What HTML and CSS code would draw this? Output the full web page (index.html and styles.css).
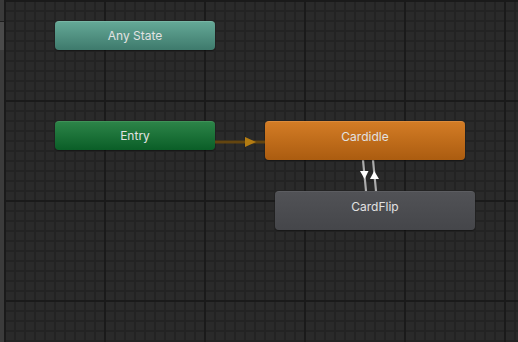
FILE: index.html
```html
<!DOCTYPE html>
<html>
<head>
<meta charset="utf-8">
<link rel="stylesheet" href="styles.css">
</head>
<body>
<div class="window">
  <div class="strip">
    <div class="strip-top"></div>
    <div class="strip-thumb"></div>
    <div class="strip-rest"></div>
  </div>
  <div class="graph">
    <svg class="links" width="514" height="342" viewBox="4 0 514 342">
      <line x1="215" y1="142" x2="265" y2="142" stroke="#634510" stroke-width="3"/>
      <polygon points="245,137 256,142 245,147" fill="#b47c12"/>
      <line x1="363" y1="160" x2="366" y2="191" stroke="#c4c4c4" stroke-width="2.2" stroke-opacity="0.85"/>
      <line x1="373" y1="160" x2="376" y2="191" stroke="#c4c4c4" stroke-width="2.2" stroke-opacity="0.85"/>
      <polygon points="360,171 368.5,171 364.6,179" fill="#ffffff"/>
      <polygon points="370,179 379,179 374.2,171" fill="#ffffff"/>
    </svg>
    <div class="node any-state">Any State</div>
    <div class="node entry">Entry</div>
    <div class="node state default-state">Cardidle</div>
    <div class="node state plain-state">CardFlip</div>
  </div>
</div>
</body>
</html>
```
FILE: styles.css
```css
html, body {
  margin: 0;
  padding: 0;
  background: #282828;
}
.window {
  width: 518px;
  height: 342px;
  display: flex;
  overflow: hidden;
  font-family: Inter, "Noto Sans", sans-serif;
}
.strip {
  width: 4px;
  flex: none;
  display: flex;
  flex-direction: column;
  background: #3c3c3c;
}
.strip-top {
  height: 21px;
  background: #3a3a3a;
  border-bottom: 1px solid #1e1e1e;
}
.strip-thumb {
  height: 28px;
  background: #4a4a4a;
}
.strip-rest {
  flex: 1;
  background: #3b3b3b;
}
.graph {
  position: relative;
  flex: 1;
  background-color: #2a2a2a;
  background-image:
    linear-gradient(to right, #1a1a1a 0, #1a1a1a 2px, transparent 2px),
    linear-gradient(to bottom, #1a1a1a 0, #1a1a1a 2px, transparent 2px),
    linear-gradient(to right, #232323 0, #232323 2px, transparent 2px),
    linear-gradient(to bottom, #232323 0, #232323 2px, transparent 2px);
  background-size: 100px 100%, 100% 100px, 10px 100%, 100% 10px;
  background-position: 0 0, 0 0, 0 0, 0 0;
}
.links {
  position: absolute;
  left: 0;
  top: 0;
}
.node {
  position: absolute;
  box-sizing: border-box;
  border-radius: 4px;
  color: #e2e2e2;
  font-size: 12px;
  line-height: 29px;
  text-align: center;
  box-shadow: 0 1px 1px rgba(0, 0, 0, 0.35);
}
.any-state {
  left: 51px;
  top: 21px;
  width: 160px;
  height: 29px;
  background: linear-gradient(to bottom, #64a896, #3e7a6c);
  border-top: 1px solid #78b6a5;
  line-height: 28px;
}
.entry {
  left: 51px;
  top: 121px;
  width: 160px;
  height: 29px;
  background: linear-gradient(to bottom, #2c8448, #0a5e27);
  border-top: 1px solid #3f9258;
  line-height: 28px;
}
.state {
  width: 200px;
  height: 39px;
  line-height: 30px;
}
.default-state {
  left: 261px;
  top: 121px;
  background: linear-gradient(to bottom, #d37c25, #ab5c10);
  border-top: 1px solid #dc8c3c;
}
.plain-state {
  left: 271px;
  top: 191px;
  background: linear-gradient(to bottom, #515256, #45464a);
  border-top: 1px solid #5c5d61;
}
```
